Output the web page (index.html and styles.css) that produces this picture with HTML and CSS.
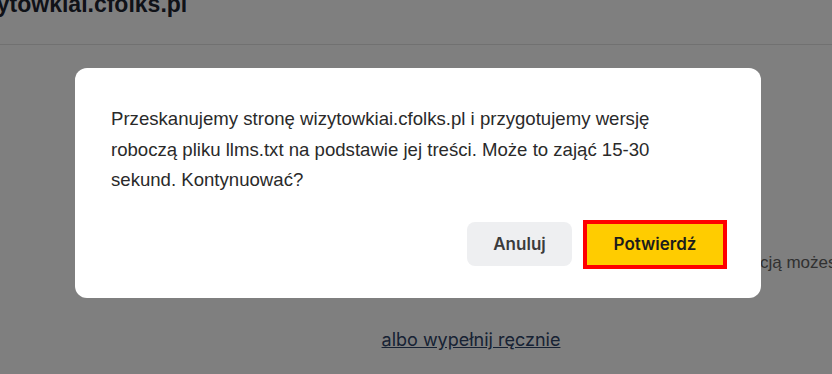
FILE: index.html
```html
<!DOCTYPE html>
<html lang="pl">
<head>
    <meta charset="utf-8">
    <title>wizytowkiai.cfolks.pl – llms.txt</title>
    <link rel="stylesheet" href="styles.css">
</head>
<body>
<!-- page behind the modal -->
<div id="page">
    <header class="site-header">
        <h1 class="site-title">wizytowkiai.cfolks.pl</h1>
    </header>
    <main class="page-content">
        <p class="hint">Przed publikacją możesz jeszcze edytować wygenerowany plik.</p>
        <div class="manual">
            <a href="#" class="manual-link">albo wypełnij ręcznie</a>
        </div>
    </main>
</div>

<!-- confirm modal -->
<div class="overlay">
    <div class="dialog" role="dialog">
        <p class="dialog-text">Przeskanujemy stronę wizytowkiai.cfolks.pl i przygotujemy wersję roboczą pliku llms.txt na podstawie jej treści. Może to zająć 15-30 sekund. Kontynuować?</p>
        <div class="dialog-actions">
            <button class="btn btn-cancel">Anuluj</button>
            <button class="btn btn-confirm">Potwierdź</button>
        </div>
    </div>
</div>
</body>
</html>
```
FILE: styles.css
```css
body {
    margin: 0;
    background-color: #FFFFFF;
    font-family: "Liberation Sans", Arial, sans-serif;
    overflow: hidden;
}
#page {
    height: 374px;
}
.site-header {
    height: 44px;
    border-bottom: 1px solid #E2E2E2;
    overflow: hidden;
}
.site-title {
    margin: -10px 0 0 -39px;
    font-size: 23px;
    line-height: 28px;
    font-weight: bold;
    color: #1F2430;
}
.page-content {
    padding-top: 208px;
}
.hint {
    margin: 0 0 0 657px;
    white-space: nowrap;
    font-size: 17px;
    color: #626262;
}
.manual {
    margin-top: 56px;
    padding-left: 110px;
    text-align: center;
}
.manual-link {
    font-family: Inter, "Liberation Sans", sans-serif;
    font-size: 18px;
    color: #2F4468;
    text-decoration: underline;
}
/* Modal */
.overlay {
    position: fixed;
    inset: 0;
    display: flex;
    align-items: center;
    justify-content: center;
    padding: 0 0 8px 4px;
    background-color: rgba(0, 0, 0, 0.5);
}
.dialog {
    width: 686px;
    box-sizing: border-box;
    padding: 36px 34px 29px 36px;
    background-color: #FFFFFF;
    border-radius: 12px;
}
.dialog-text {
    margin: 0;
    max-width: 580px;
    font-size: 18.6px;
    line-height: 30.6px;
    color: #2A2A2A;
}
.dialog-actions {
    display: flex;
    justify-content: flex-end;
    align-items: center;
    gap: 11px;
    margin-top: 24px;
}
.btn {
    font-family: Inter, "Liberation Sans", sans-serif;
    font-size: 17px;
    font-weight: 600;
    cursor: pointer;
    box-sizing: border-box;
}
.btn-cancel {
    width: 105px;
    height: 44px;
    border: none;
    border-radius: 8px;
    background-color: #EEEFF1;
    color: #3B3B3B;
}
.btn-confirm {
    width: 144px;
    height: 49px;
    border: 4px solid #FF0000;
    border-radius: 0;
    background-color: #FFCC00;
    color: #1C1C1C;
}
```
